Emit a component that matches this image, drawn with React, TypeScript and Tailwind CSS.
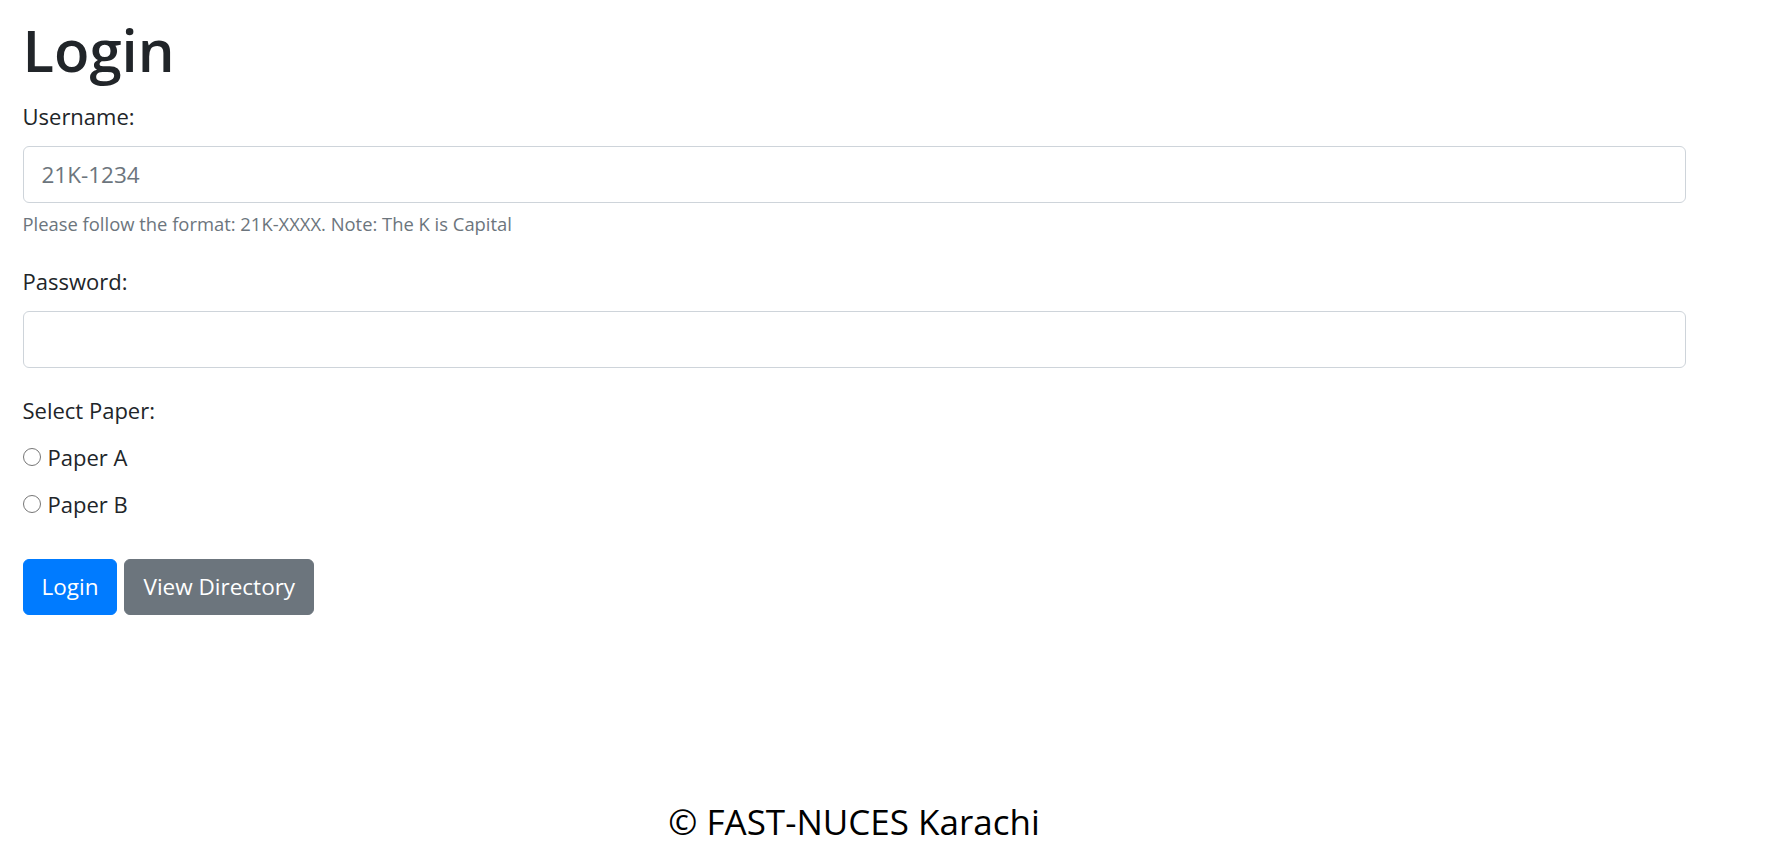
import { useState } from "react";

export default function App() {
    const [paper, setPaper] = useState("");
    const papers = ["Paper A", "Paper B"];

    return (
        <div className="flex flex-col h-screen bg-white font-['Open_Sans',sans-serif] text-[#212529]">
            <div className="pt-[14px] pl-[22.5px] pr-[79px]">
                <h1 className="text-[58px] font-semibold leading-[72px] mb-[12px]">Login</h1>

                <div className="mb-[24px]">
                    <label htmlFor="username" className="block text-[22px] leading-[36px] mb-[12px]">Username:</label>
                    <input
                        id="username"
                        type="text"
                        placeholder="21K-1234"
                        className="block w-full h-[57px] px-[18px] text-[22.5px] border-[1.5px] border-[#ced4da] rounded-[6px] placeholder:text-[#6c757d] outline-none"
                    />
                    <small className="block mt-[7px] text-[18.4px] leading-[28.8px] text-[#6c757d]">
                        Please follow the format: 21K-XXXX. Note: The K is Capital
                    </small>
                </div>

                <div className="mb-[24px]">
                    <label htmlFor="password" className="block text-[22px] leading-[36px] mb-[12px]">Password:</label>
                    <input
                        id="password"
                        type="password"
                        className="block w-full h-[57px] px-[18px] text-[22px] border-[1.5px] border-[#ced4da] rounded-[6px] outline-none"
                    />
                </div>

                <div className="mb-[36px]">
                    <label className="block text-[22px] leading-[36px] mb-[12px]">Select Paper:</label>
                    {papers.map((p) => (
                        <label key={p} className="flex items-center h-[36px] mb-[11px] text-[22px] cursor-pointer">
                            <input
                                type="radio"
                                name="paper"
                                value={p}
                                checked={paper === p}
                                onChange={() => setPaper(p)}
                                className="appearance-none w-[18px] h-[18px] rounded-full border-[1.5px] border-[#767676] bg-white checked:border-[5px] checked:border-[#0075ff] mr-[7px] mt-[-1px]"
                            />
                            {p}
                        </label>
                    ))}
                </div>

                <div className="flex gap-[7px]">
                    <button className="h-[56px] px-[18px] text-[22.5px] text-white bg-[#007bff] border-[1.5px] border-[#007bff] rounded-[6px]">
                        Login
                    </button>
                    <button className="h-[56px] px-[18px] text-[22.5px] text-white bg-[#6c757d] border-[1.5px] border-[#6c757d] rounded-[6px]">
                        View Directory
                    </button>
                </div>
            </div>

            <footer className="mt-auto pb-[13px] pr-[57px] text-center text-[35px] leading-[54px] text-black">
                © FAST-NUCES Karachi
            </footer>
        </div>
    );
}
